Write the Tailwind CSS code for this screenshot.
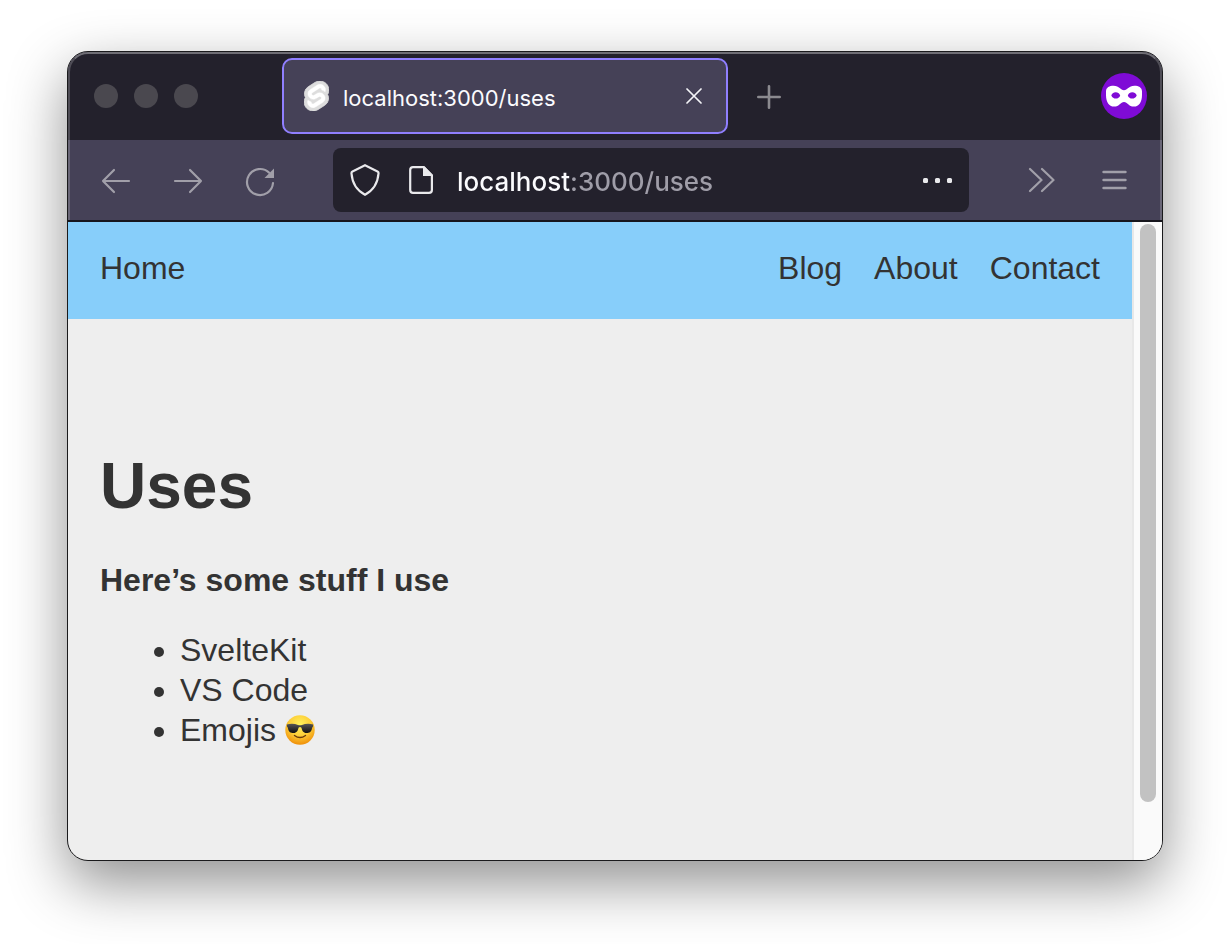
<!DOCTYPE html>
<html lang="en">
<head>
<meta charset="utf-8">
<meta name="viewport" content="width=device-width, initial-scale=1">
<title>localhost:3000/uses</title>
<script src="https://cdn.jsdelivr.net/npm/@tailwindcss/browser@4"></script>
</head>
<body class="bg-white">
<div class="flex h-screen min-h-[600px] overflow-hidden px-[67px] pt-[51px] pb-[83px]">
  <div class="relative flex min-w-0 flex-1 flex-col overflow-hidden rounded-[21px] border border-[#1a1a1c] bg-[#eee] shadow-[0_22px_58px_rgba(0,0,0,0.44)]">

    <!-- Browser chrome -->
    <header class="relative shrink-0 border-b-2 border-[#17161d] bg-[#454157] font-['Inter',sans-serif]">
      <div class="flex h-22 items-center bg-[#23212c] pr-[15px] pl-[26px]">
        <div class="flex gap-4">
          <button aria-label="Close window" class="size-6 rounded-full bg-[#4a484f]"></button>
          <button aria-label="Minimize window" class="size-6 rounded-full bg-[#4a484f]"></button>
          <button aria-label="Zoom window" class="size-6 rounded-full bg-[#4a484f]"></button>
        </div>
        <div class="ml-[84px] flex h-[76px] w-[446px] items-center rounded-[10px] border-2 border-[#907fff] bg-[#454157] pr-6 pl-5">
          <svg class="h-[30px] w-[25px]" viewBox="2 0 20 24" aria-hidden="true">
            <path fill="#ddd" stroke="#ddd" stroke-width=".6" d="M20.712 3.175C18.484-.015 14.082-.96 10.9 1.068L5.31 4.63a6.412 6.412 0 0 0-2.896 4.295 6.753 6.753 0 0 0 .666 4.336 6.43 6.43 0 0 0-.96 2.396 6.833 6.833 0 0 0 1.168 5.167c2.229 3.19 6.63 4.135 9.812 2.108l5.59-3.562a6.41 6.41 0 0 0 2.896-4.295 6.756 6.756 0 0 0-.665-4.336 6.429 6.429 0 0 0 .958-2.396 6.831 6.831 0 0 0-1.167-5.168Z"/>
            <path fill="#fff" stroke="#fff" stroke-width=".4" d="M10.354 21.125a4.44 4.44 0 0 1-4.765-1.767 4.109 4.109 0 0 1-.703-3.107 3.898 3.898 0 0 1 .134-.522l.105-.321.287.21a7.21 7.21 0 0 0 2.186 1.092l.208.063-.02.208a1.253 1.253 0 0 0 .226.83 1.337 1.337 0 0 0 1.435.533 1.231 1.231 0 0 0 .343-.15l5.59-3.562a1.164 1.164 0 0 0 .524-.778 1.242 1.242 0 0 0-.211-.937 1.338 1.338 0 0 0-1.435-.533 1.23 1.23 0 0 0-.343.15l-2.133 1.36a4.078 4.078 0 0 1-1.135.499 4.44 4.44 0 0 1-4.765-1.766 4.108 4.108 0 0 1-.702-3.108 3.855 3.855 0 0 1 1.742-2.582l5.589-3.563a4.072 4.072 0 0 1 1.135-.499 4.44 4.44 0 0 1 4.765 1.767 4.109 4.109 0 0 1 .703 3.107 3.943 3.943 0 0 1-.134.522l-.105.321-.286-.21a7.204 7.204 0 0 0-2.187-1.093l-.208-.063.02-.207a1.255 1.255 0 0 0-.226-.831 1.337 1.337 0 0 0-1.435-.532 1.231 1.231 0 0 0-.343.15L8.62 9.368a1.162 1.162 0 0 0-.524.778 1.24 1.24 0 0 0 .211.937 1.338 1.338 0 0 0 1.435.533 1.235 1.235 0 0 0 .344-.151l2.132-1.36a4.067 4.067 0 0 1 1.135-.498 4.44 4.44 0 0 1 4.765 1.766 4.108 4.108 0 0 1 .702 3.108 3.857 3.857 0 0 1-1.742 2.583l-5.589 3.562a4.072 4.072 0 0 1-1.135.499"/>
          </svg>
          <span class="ml-3.5 flex-1 truncate pt-1 text-[22px] leading-8 text-[#fbfbfe]">localhost:3000/uses</span>
          <button aria-label="Close tab"><svg class="size-4" viewBox="0 0 16 16" fill="none" stroke="#f4f4f8" stroke-width="1.7" stroke-linecap="round"><path d="M1 1l14 14M15 1L1 15"/></svg></button>
        </div>
        <button aria-label="New tab" class="ml-[29px] pt-0.5"><svg class="size-6" viewBox="0 0 24 24" fill="none" stroke="#8b8a8f" stroke-width="2.6" stroke-linecap="round"><path d="M12 1.3v21.4M1.3 12h21.4"/></svg></button>
        <span class="ml-auto"><svg class="size-[46px]" viewBox="0 0 46 46" role="img" aria-label="Private browsing"><circle cx="23" cy="23" r="23" fill="#7f0bd6"/><path fill="#fff" fill-rule="evenodd" d="M5 18.500C5 14.500 8.500 12.800 12.500 12.800C18.500 12.800 19.500 17.300 23 17.300S27.500 12.800 33.500 12.800C37.500 12.800 41 14.500 41 18.500V22C41 29 38 33.600 33 33.600C27.500 33.600 26.500 29 23 29S18.500 33.600 13 33.600C8 33.600 5 29 5 22ZM14.800 19.200C12.300 19.200 10.800 20.800 10.300 22.500C11.300 24.700 12.800 25.600 14.800 25.600S18.400 24.700 19.200 22.500C18.300 20.200 16.800 19.200 14.800 19.200ZM31.200 19.200C29.200 19.200 27.700 20.200 26.800 22.500C27.600 24.700 29.200 25.600 31.200 25.600S34.700 24.700 35.700 22.500C35.200 20.800 33.700 19.200 31.200 19.200Z"/></svg></span>
      </div>

      <div class="flex h-20 items-center pr-[35px] pl-[33px] text-[#a19fa9]">
        <nav aria-label="History" class="flex gap-[42px]">
          <button aria-label="Back"><svg class="size-[30px]" viewBox="0 0 30 30" fill="none" stroke="currentColor" stroke-width="2.200" stroke-linecap="round" stroke-linejoin="round"><path d="M28 16H2M13 5L2 16l11 11"/></svg></button>
          <button aria-label="Forward"><svg class="size-[30px]" viewBox="0 0 30 30" fill="none" stroke="currentColor" stroke-width="2.200" stroke-linecap="round" stroke-linejoin="round"><path d="M2 16h26M17 5l11 11-11 11"/></svg></button>
          <button aria-label="Reload"><svg class="size-[30px] overflow-visible" viewBox="0 0 30 30" fill="none" stroke="currentColor" stroke-width="2.200" stroke-linecap="round"><path d="M28 18A13 13 0 1 1 24.200 7.800"/><path d="M29 3.500V13H19.500Z" fill="currentColor" stroke="none"/></svg></button>
        </nav>
        <div class="ml-[58px] flex h-16 min-w-0 flex-1 items-center rounded-lg bg-[#23212c] px-4 text-[#e9e9ec]">
          <button aria-label="Tracking protection"><svg class="h-8 w-8" viewBox="0 0 32 32" fill="none" stroke="currentColor" stroke-width="2.200" stroke-linejoin="round"><path d="M16 1.200L28.500 7.500Q29.700 8.100 29.500 9.500C28.700 20 24 26.500 16 30.800C8 26.500 3.300 20 2.500 9.500Q2.300 8.100 3.500 7.500Z"/></svg></button>
          <button aria-label="Site information" class="ml-7"><svg class="h-7 w-6" viewBox="0 0 24 28" fill="none" stroke="currentColor" stroke-width="2.200" stroke-linejoin="round"><path d="M4 1.200H15L22.900 9.500V24Q22.900 26.800 20 26.800H4Q1.200 26.800 1.200 24V4Q1.200 1.200 4 1.200Z"/><path d="M14 0.500H15.500L23.500 8.500V10H14Z" fill="currentColor" stroke="none"/></svg></button>
          <input aria-label="Address" value="localhost:3000/uses" class="ml-6 min-w-0 flex-1 bg-linear-to-r from-[#fbfbfe] from-[114px] to-[#9f9da8] to-[114px] bg-clip-text pt-1 text-[26px] leading-10 font-medium text-transparent caret-white outline-none">
          <button aria-label="Page actions" class="pt-0.5"><svg class="h-8 w-[30px]" viewBox="0 0 30 32" fill="currentColor"><rect x="0" y="13" width="5" height="5" rx="1.500"/><rect x="12" y="13" width="5" height="5" rx="1.500"/><rect x="24" y="13" width="5" height="5" rx="1.500"/></svg></button>
        </div>
        <button aria-label="More tools" class="ml-[59px]"><svg class="h-[26px] w-[27px]" viewBox="0 0 27 26" fill="none" stroke="currentColor" stroke-width="2.200" stroke-linecap="round" stroke-linejoin="round"><path d="M2 2l11.500 11L2 24M14 2l11.500 11L14 24"/></svg></button>
        <button aria-label="Menu" class="ml-[47px]"><svg class="h-6 w-[25px]" viewBox="0 0 25 24" fill="none" stroke="currentColor" stroke-width="2.400" stroke-linecap="round"><path d="M1.500 4h22M1.500 12h22M1.500 20h22"/></svg></button>
      </div>
      <div class="pointer-events-none absolute inset-0 rounded-t-[20px] border-x-2 border-t-2 border-t-white/35 border-x-white/20"></div>
    </header>

    <!-- Page viewport -->
    <div class="flex min-h-0 flex-1 font-['Liberation_Sans',Arial,sans-serif] text-[32px] text-[#333]">
      <div class="min-w-0 flex-1">
        <nav aria-label="Main" class="flex gap-8 bg-[#87cefa] px-8 pt-7 pb-8 leading-[37px]">
          <a href="#home" class="mr-auto">Home</a>
          <a href="#blog">Blog</a>
          <a href="#about">About</a>
          <a href="#contact">Contact</a>
        </nav>
        <main class="px-8 pt-[130px]">
          <h1 class="text-[64px] leading-[74px] font-bold">Uses</h1>
          <h2 class="mt-[39px] leading-[37px] font-bold">Here’s some stuff I use</h2>
          <ul class="mt-[31px] list-disc pl-20 leading-10">
            <li>SvelteKit</li>
            <li>VS Code</li>
            <li>Emojis <svg class="inline-block size-[30px] align-[-4px]" viewBox="0 0 30 30" role="img" aria-label="Smiling face with sunglasses">
              <defs>
                <radialGradient id="face" cx="50%" cy="32%" r="66%"><stop offset="0" stop-color="#fff35c"/><stop offset=".55" stop-color="#fdd03a"/><stop offset="1" stop-color="#f0930c"/></radialGradient>
                <linearGradient id="lens" x1="0" y1="0" x2="0" y2="1"><stop offset="0" stop-color="#555"/><stop offset="1" stop-color="#111"/></linearGradient>
              </defs>
              <circle cx="15" cy="15" r="14.700" fill="url(#face)"/>
              <path d="M9.500 20.500Q15 24.600 20.500 20.500" fill="none" stroke="#6b3d0c" stroke-width="1.400" stroke-linecap="round"/>
              <path fill="url(#lens)" d="M1.800 9.500Q8 8 13 10Q15 10.600 17 10Q22 8 28.200 9.500L28 11.500Q27.300 12 27 13.500C26.300 17.300 24.300 18 21.500 18C18.300 18 17 15.500 16.500 12.700Q15 11.300 13.500 12.700C13 15.500 11.700 18 8.500 18C5.700 18 3.700 17.300 3 13.500Q2.700 12 2 11.500Z"/>
            </svg></li>
          </ul>
        </main>
      </div>
      <div class="w-[30px] shrink-0 border-l-2 border-[#e8e8e8] bg-[#fafafa] px-1.5 pt-0.5 pb-[58px]">
        <div class="h-full w-4 rounded-full bg-[#c2c2c2]"></div>
      </div>
    </div>
  </div>
</div>
</body>
</html>
